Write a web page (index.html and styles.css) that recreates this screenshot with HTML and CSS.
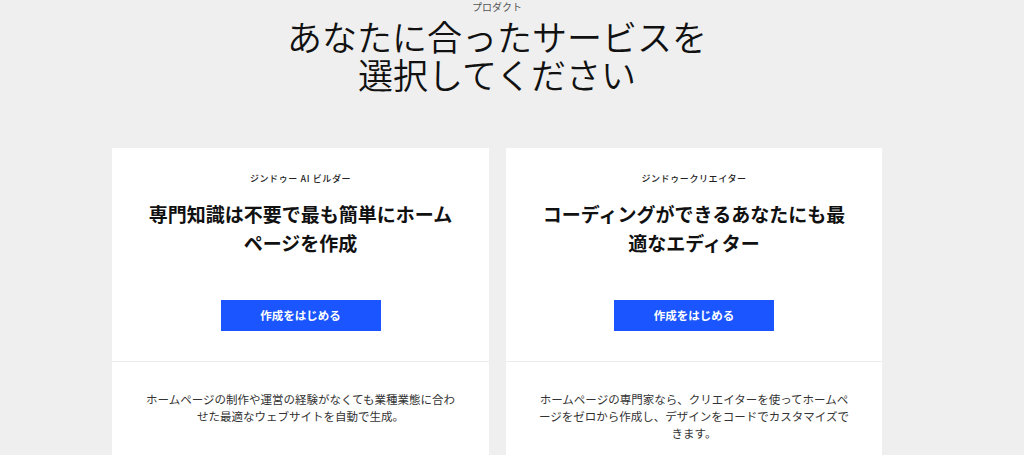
FILE: index.html
```html
<!DOCTYPE html>
<html lang="ja">
<head>
<meta charset="utf-8">
<title>プロダクト</title>
<link rel="stylesheet" href="styles.css">
</head>
<body>
<main class="page">
  <p class="eyebrow">プロダクト</p>
  <h1 class="headline">あなたに合ったサービスを選択してください</h1>
  <section class="cards">
    <article class="card">
      <div class="card-top">
        <p class="card-label">ジンドゥー AI ビルダー</p>
        <h2 class="card-title">専門知識は不要で最も簡単にホームページを作成</h2>
        <a class="btn" href="#">作成をはじめる</a>
      </div>
      <div class="card-bottom">
        <p class="card-desc">ホームページの制作や運営の経験がなくても業種業態に合わせた最適なウェブサイトを自動で生成。</p>
      </div>
    </article>
    <article class="card">
      <div class="card-top">
        <p class="card-label">ジンドゥークリエイター</p>
        <h2 class="card-title">コーディングができるあなたにも最適なエディター</h2>
        <a class="btn" href="#">作成をはじめる</a>
      </div>
      <div class="card-bottom">
        <p class="card-desc">ホームページの専門家なら、クリエイターを使ってホームページをゼロから作成し、デザインをコードでカスタマイズできます。</p>
      </div>
    </article>
  </section>
</main>
</body>
</html>
```

FILE: styles.css
```css
html, body {
  margin: 0;
  padding: 0;
  background: #efefef;
}
body {
  font-family: "Noto Sans CJK JP", "Noto Sans", "Liberation Sans", sans-serif;
  color: #111;
}
.page {
  width: 994px;
  display: flex;
  flex-direction: column;
  align-items: center;
}
.eyebrow {
  margin: 0;
  font-size: 10px;
  line-height: 12px;
  padding-top: 1px;
  color: #555;
  text-align: center;
}
.headline {
  margin: 4px 0 0;
  max-width: 430px;
  font-size: 35px;
  line-height: 38px;
  font-weight: 350;
  color: #111;
  text-align: center;
}
.cards {
  margin-top: 55px;
  display: grid;
  grid-template-columns: 377px 376px;
  gap: 17px;
}
.card {
  background: #fff;
  text-align: center;
}
.card-top {
  padding: 24px 30px 30px;
  border-bottom: 1px solid #ececec;
  display: flex;
  flex-direction: column;
  align-items: center;
}
.card-label {
  margin: 0;
  font-size: 9px;
  line-height: 14px;
  letter-spacing: 0.6px;
  font-weight: 500;
  color: #222;
}
.card-title {
  margin: 13px 0 0;
  font-size: 19px;
  line-height: 29px;
  font-weight: 700;
  color: #111;
}
.btn {
  margin-top: 43px;
  width: 160px;
  height: 31px;
  background: #1a55ff;
  color: #fff;
  font-size: 11.5px;
  font-weight: 700;
  line-height: 31px;
  text-decoration: none;
  display: block;
}
.card-bottom {
  padding: 29px 30px 30px;
}
.card-desc {
  margin: 0;
  font-size: 11.5px;
  line-height: 17px;
  color: #333;
}
```
